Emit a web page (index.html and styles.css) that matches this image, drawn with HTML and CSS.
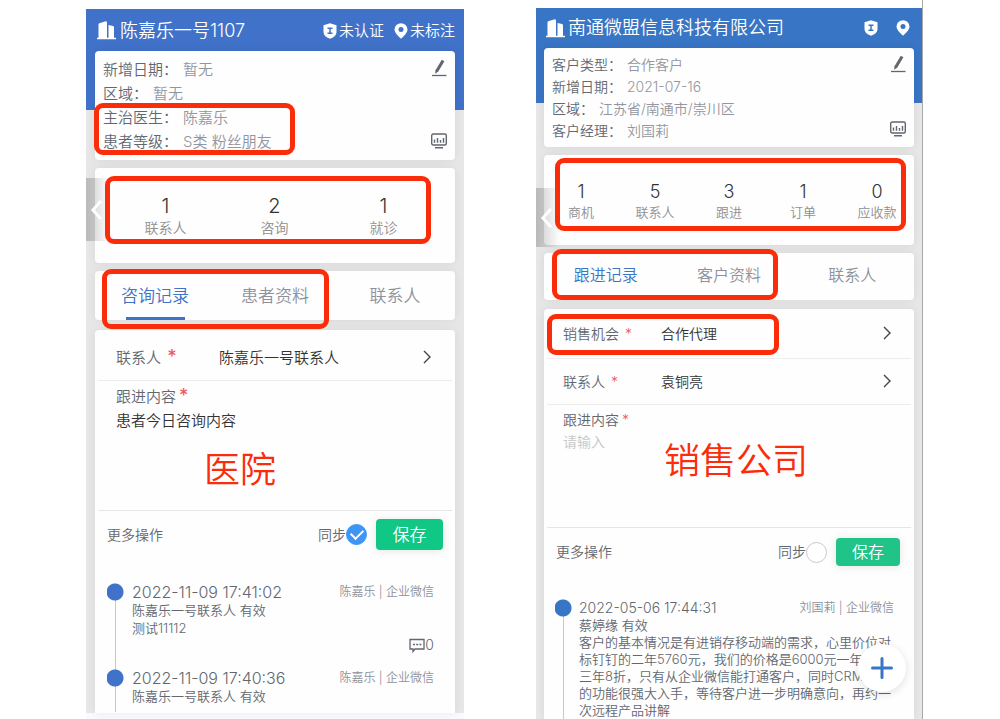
FILE: index.html
```
<!DOCTYPE html>
<html lang="zh-CN">
<head>
<meta charset="utf-8">
<title>客户跟进</title>
<link rel="stylesheet" href="styles.css">
</head>
<body>
<svg class="defs" aria-hidden="true">
  <symbol id="building" viewBox="0 0 19 19"><path d="M1.500 3.200 Q1.500 2.500 2.200 2.200 L8 .4 Q10 0 10 1.800 V18 H1.500Z M11.500 4 L16 5 Q17 5.300 17 6.200 V18 H11.500Z M0 16.800 H19 V18.300 H0Z" fill="currentColor"/></symbol>
  <symbol id="shield" viewBox="0 0 14 16"><path d="M7 .2 L13.500 2.300 V9 Q13.500 13.500 7 15.800 Q.5 13.500 .5 9 V2.300Z" fill="currentColor"/><path d="M4.500 5.200H9.500M4.500 10.300H9.500M7 5V10.500" fill="none" stroke="var(--brand)" stroke-width="1.500"/></symbol>
  <symbol id="pin" viewBox="0 0 14 16"><path d="M7 .2 A6.500 6.500 0 0 1 13.500 6.700 Q13.500 9.800 7 15.800 Q.5 9.800 .5 6.700 A6.500 6.500 0 0 1 7 .2Z" fill="currentColor"/><circle cx="7" cy="6.500" r="2.500" fill="var(--brand)"/></symbol>
  <symbol id="pen" viewBox="0 0 16 18"><path d="M1 16.500H15.500" stroke="currentColor" stroke-width="1.300"/><path d="M10.800 .8 L13.400 2.300 L7.300 12.600 L4.200 14.700 L4.500 11.200Z" fill="currentColor"/></symbol>
  <symbol id="chart" viewBox="0 0 16 16"><rect x=".7" y="1" width="14.600" height="11" rx="1.500" fill="none" stroke="currentColor" stroke-width="1.400"/><path d="M3.500 6.500V9.700M6.500 5V9.700M9.500 7V9.700M12.500 5V9.700M4 14.700H12" stroke="currentColor" stroke-width="1.400"/></symbol>
  <symbol id="right" viewBox="0 0 10 14"><path d="M2 1 L8 7 L2 13" fill="none" stroke="currentColor" stroke-width="1.400"/></symbol>
  <symbol id="left" viewBox="0 0 14 22"><path d="M12 2 L4 11 L12 20" fill="none" stroke="currentColor" stroke-width="3"/></symbol>
  <symbol id="comment" viewBox="0 0 16 15"><path d="M1 1.500H15V11H6L4 13.500V11H1Z" fill="none" stroke="currentColor" stroke-width="1.300"/><path d="M4 6.500H6M7.200 6.500H9.200M10.400 6.500H12.400" stroke="currentColor" stroke-width="1.500"/></symbol>
  <symbol id="plus" viewBox="0 0 22 22"><path d="M11 1.500V20.500M1.500 11H20.500" stroke="currentColor" stroke-width="3" stroke-linecap="round"/></symbol>
</svg>
<main class="compare">
  <section class="screen hospital">
    <div class="phone">
      <header class="top">
        <svg class="i-building"><use href="#building"/></svg>
        <h1>陈嘉乐一号1107</h1>
        <button class="status"><svg class="i-badge"><use href="#shield"/></svg>未认证</button>
        <button class="status"><svg class="i-badge"><use href="#pin"/></svg>未标注</button>
      </header>
      <section class="card info">
        <dl>
          <div><dt>新增日期：</dt><dd>暂无</dd></div>
          <div><dt>区域：</dt><dd>暂无</dd></div>
          <div><dt>主治医生：</dt><dd>陈嘉乐</dd></div>
          <div><dt>患者等级：</dt><dd>S类 粉丝朋友</dd></div>
        </dl>
        <div class="tools">
          <button aria-label="编辑"><svg class="i-pen"><use href="#pen"/></svg></button>
          <button aria-label="统计"><svg class="i-chart"><use href="#chart"/></svg></button>
        </div>
      </section>
      <section class="card stats">
        <div><b>1</b><span>联系人</span></div>
        <div><b>2</b><span>咨询</span></div>
        <div><b>1</b><span>就诊</span></div>
      </section>
      <nav class="card tabs">
        <button class="active">咨询记录</button>
        <button>患者资料</button>
        <button>联系人</button>
      </nav>
      <section class="card record">
        <button class="pick"><span class="name">联系人 <i>*</i></span><span class="value">陈嘉乐一号联系人</span><svg class="i-right"><use href="#right"/></svg></button>
        <div class="content">
          <label for="note-a">跟进内容<i>*</i></label>
          <textarea id="note-a">患者今日咨询内容</textarea>
        </div>
        <div class="actions">
          <span class="more">更多操作</span>
          <label for="sync-a">同步</label><input type="checkbox" id="sync-a" checked>
          <button class="save">保存</button>
        </div>
        <ol class="timeline">
          <li>
            <div class="when"><time>2022-11-09 17:41:02</time><span>陈嘉乐 | 企业微信</span></div>
            <p>陈嘉乐一号联系人 有效</p>
            <p>测试11112</p>
            <button class="reply"><svg class="i-comment"><use href="#comment"/></svg>0</button>
          </li>
          <li>
            <div class="when"><time>2022-11-09 17:40:36</time><span>陈嘉乐 | 企业微信</span></div>
            <p>陈嘉乐一号联系人 有效</p>
          </li>
        </ol>
      </section>
      <button class="drawer" aria-label="展开"><svg class="i-left"><use href="#left"/></svg></button>
      <div class="mark mark-info"></div>
      <div class="mark mark-stats"></div>
      <div class="mark mark-tabs"></div>
      <strong class="caption">医院</strong>
    </div>
  </section>

  <section class="screen sales">
    <div class="phone">
      <header class="top">
        <svg class="i-building"><use href="#building"/></svg>
        <h1>南通微盟信息科技有限公司</h1>
        <button class="status" aria-label="认证"><svg class="i-badge"><use href="#shield"/></svg></button>
        <button class="status" aria-label="位置"><svg class="i-badge"><use href="#pin"/></svg></button>
      </header>
      <section class="card info">
        <dl>
          <div><dt>客户类型：</dt><dd>合作客户</dd></div>
          <div><dt>新增日期：</dt><dd>2021-07-16</dd></div>
          <div><dt>区域：</dt><dd>江苏省/南通市/崇川区</dd></div>
          <div><dt>客户经理：</dt><dd>刘国莉</dd></div>
        </dl>
        <div class="tools">
          <button aria-label="编辑"><svg class="i-pen"><use href="#pen"/></svg></button>
          <button aria-label="统计"><svg class="i-chart"><use href="#chart"/></svg></button>
        </div>
      </section>
      <section class="card stats">
        <div><b>1</b><span>商机</span></div>
        <div><b>5</b><span>联系人</span></div>
        <div><b>3</b><span>跟进</span></div>
        <div><b>1</b><span>订单</span></div>
        <div><b>0</b><span>应收款</span></div>
      </section>
      <nav class="card tabs">
        <button class="active">跟进记录</button>
        <button>客户资料</button>
        <button>联系人</button>
      </nav>
      <section class="card record">
        <button class="pick"><span class="name">销售机会 <i>*</i></span><span class="value">合作代理</span><svg class="i-right"><use href="#right"/></svg></button>
        <button class="pick"><span class="name">联系人 <i>*</i></span><span class="value">袁铜亮</span><svg class="i-right"><use href="#right"/></svg></button>
        <div class="content">
          <label for="note-b">跟进内容<i>*</i></label>
          <textarea id="note-b" placeholder="请输入"></textarea>
        </div>
        <div class="actions">
          <span class="more">更多操作</span>
          <label for="sync-b">同步</label><input type="checkbox" id="sync-b">
          <button class="save">保存</button>
        </div>
        <ol class="timeline">
          <li>
            <div class="when"><time>2022-05-06 17:44:31</time><span>刘国莉 | 企业微信</span></div>
            <p>蔡婷缘 有效</p>
            <p>客户的基本情况是有进销存移动端的需求，心里价位对<br>标钉钉的二年5760元，我们的价格是6000元一年<br>三年8折，只有从企业微信能打通客户，同时CRM<br>的功能很强大入手，等待客户进一步明确意向，再约一<br>次远程产品讲解</p>
          </li>
        </ol>
      </section>
      <button class="drawer" aria-label="展开"><svg class="i-left"><use href="#left"/></svg></button>
      <button class="add" aria-label="新增"><svg class="i-plus"><use href="#plus"/></svg></button>
      <div class="mark mark-stats"></div>
      <div class="mark mark-tabs"></div>
      <div class="mark mark-pick"></div>
      <strong class="caption">销售公司</strong>
    </div>
  </section>
</main>
</body>
</html>
```
FILE: styles.css
```
* { box-sizing: border-box; }

body {
  margin: 0;
  background: #fff;
  color: #62676f;
  font-family: Inter, "Noto Sans CJK SC", sans-serif;
  font-weight: 350;
}

button {
  border: 0;
  padding: 0;
  background: none;
  color: inherit;
  font: inherit;
  cursor: pointer;
}

svg { display: block; flex: none; }
i { font-style: normal; color: #f25a5a; }
.defs { position: absolute; width: 0; height: 0; }
.i-building { width: 19px; height: 19px; }
.i-badge { width: 14px; height: 16px; }
.i-pen { width: 16px; height: 18px; }
.i-chart { width: 16px; height: 16px; }
.i-right { width: 10px; height: 14px; }
.i-left { width: 14px; height: 22px; }
.i-comment { width: 16px; height: 15px; }
.i-plus { width: 22px; height: 22px; }

.compare {
  display: grid;
  grid-template-columns: 378fr 387fr;
  column-gap: 72px;
  min-height: 100vh;
  padding: 0 77px 0 86px;
}

.screen { display: flex; flex-direction: column; }

.hospital {
  --brand: #4172c9;
  --pad: 9px;
  --text: 15px;
  --row: 24px;
  padding-top: 9px;
  border-bottom: 6px solid #f8fafd;
}

.sales {
  --brand: #3875c5;
  --pad: 8px;
  --text: 14px;
  --row: 22px;
  padding-top: 8px;
  border-right: 1px solid #a9a9a9;
}

.phone {
  position: relative;
  flex: 1;
  display: flex;
  flex-direction: column;
  gap: 8px;
  padding: 0 var(--pad);
  background: linear-gradient(var(--brand) 101px, #e7e7e7 101px);
}
.sales .phone { background: linear-gradient(var(--brand) 95px, #e7e7e7 95px); }

.card {
  border-radius: 4px;
  background: #fefefe;
  box-shadow: 0 0 10px rgba(0, 0, 0, .07);
}

/* title bar */
.top {
  display: flex;
  align-items: center;
  height: 34px;
  padding-top: 9px;
  padding-left: 2px;
  color: #fff;
}
.top h1 {
  flex: 1;
  margin: 0 0 0 4px;
  font-size: 18px;
  line-height: 26px;
  font-weight: 350;
  white-space: nowrap;
}
.status {
  display: flex;
  align-items: center;
  gap: 2px;
  margin-left: 10px;
  font-size: 15px;
  line-height: 22px;
}
.sales .top { height: 32px; padding-top: 8px; padding-right: 4px; }
.sales .top h1 { margin-left: 3px; }
.sales .status { margin-left: 18px; }

/* customer details */
.info {
  display: flex;
  justify-content: space-between;
  padding: 7px 8px 6px;
}
.info dl { margin: 0; font-size: var(--text); line-height: var(--row); }
.info dl div { display: flex; gap: 5px; }
.info dd { margin: 0; color: #92969f; }
.tools {
  display: flex;
  flex-direction: column;
  justify-content: space-between;
  padding: 1px 0 5px;
}
.sales .info { padding: 6px 8px 5px; }

/* counters */
.stats {
  display: grid;
  grid-template-columns: repeat(3, 1fr);
  padding: 26px 17px 26px 16px;
  text-align: center;
}
.stats b {
  display: block;
  color: #333;
  font-size: 20px;
  font-weight: 350;
  line-height: 24px;
}
.stats span {
  display: block;
  color: #8f8f8f;
  font-size: 14px;
  line-height: 19px;
}
.sales .stats { grid-template-columns: repeat(5, 1fr); padding: 26px 0 24px; }
.sales .stats b { font-size: 18px; line-height: 22px; }
.sales .stats span { font-size: 13px; line-height: 18px; }

/* tabs */
.tabs { display: grid; grid-template-columns: repeat(3, 1fr); }
.tabs button {
  height: 49px;
  color: #8c919d;
  font-size: 17px;
  line-height: 24px;
}
.tabs .active { color: var(--brand); }
.hospital .tabs .active {
  background: linear-gradient(var(--brand), var(--brand)) center bottom / 59px 3px no-repeat;
}
.sales .tabs button { height: 47px; padding-bottom: 3px; font-size: 16px; }

/* follow-up form */
.record {
  flex: 1;
  margin-top: 2px;
  padding: 0 3px;
  border-radius: 4px 4px 0 0;
  font-size: var(--text);
}
.pick {
  display: flex;
  align-items: center;
  width: 100%;
  height: 51px;
  padding: 3px 20px 0 18px;
  border-bottom: 1px solid #ececec;
  text-align: left;
}
.pick .name { width: 103px; }
.pick .value { flex: 1; color: #333; }
.pick .i-right { color: #444; }
.pick i { margin-left: 2px; }
.hospital i { font-size: 18px; line-height: 18px; font-weight: 500; }
.content {
  height: 130px;
  padding: 4px 18px 0;
  border-bottom: 1px solid #e6e6e6;
}
.content label { display: block; height: var(--row); line-height: var(--row); }
.content i { margin-left: 3px; }
.content textarea {
  display: block;
  width: 100%;
  height: 80px;
  padding: 0;
  border: 0;
  outline: 0;
  resize: none;
  background: none;
  color: #333;
  font: inherit;
  line-height: var(--row);
}
.content textarea::placeholder { color: #c6c6c6; opacity: 1; }
.sales .record { margin-top: 1px; }
.sales .pick { height: 46px; padding: 0 19px 2px 16px; }
.sales .pick:first-child { height: 50px; }
.sales .pick .name { width: 98px; }
.sales .content { height: 123px; padding: 4px 16px 0; }

.actions {
  display: flex;
  align-items: center;
  padding: 8px 9px 0;
  font-size: 14px;
  line-height: 20px;
}
.more { flex: 1; }
.actions input {
  appearance: none;
  width: 21px;
  height: 21px;
  margin: 0 9px 0 0;
  border: 1px solid #c9c9c9;
  border-radius: 50%;
  background: #fff;
}
.actions input:checked {
  display: grid;
  place-items: center;
  border-color: #3d95f5;
  background: #3d95f5;
}
.actions input:checked::before {
  content: "";
  width: 10px;
  height: 6px;
  margin-bottom: 3px;
  border: solid #fff;
  border-width: 0 0 2px 2px;
  rotate: -45deg;
}
.save {
  width: 67px;
  height: 31px;
  border-radius: 4px;
  background: #10c785;
  color: #fff;
  font-size: 17px;
  line-height: 24px;
  box-shadow: 0 1px 10px rgba(0, 0, 0, .1);
}
.sales .actions { padding: 10px 11px 0 9px; }
.sales .save { width: 64px; height: 28px; font-size: 16px; background: #20c388; }

/* history */
.timeline {
  margin: 33px 0 0;
  padding: 0 18px 0 9px;
  list-style: none;
}
.timeline li {
  padding: 0 0 16px 25px;
  background:
    radial-gradient(circle at 8px 9px, var(--brand) 8px, transparent 9px),
    linear-gradient(#c4c8d0, #c4c8d0) 8px 0 / 1px 100% no-repeat;
}
.timeline li:last-child { padding-bottom: 7px; }
.timeline li:first-child {
  background:
    radial-gradient(circle at 8px 9px, var(--brand) 8px, transparent 9px),
    linear-gradient(#c4c8d0, #c4c8d0) 8px 9px / 1px 100% no-repeat;
}
.when { display: flex; justify-content: space-between; align-items: center; }
.when time { font-size: 16px; line-height: 18px; white-space: nowrap; }
.when span { color: #8c919d; font-size: 12px; line-height: 18px; white-space: nowrap; }
.timeline p {
  margin: 0;
  font-size: 13px;
  line-height: 18px;
  white-space: nowrap;
}
.reply {
  display: flex;
  align-items: center;
  margin-left: auto;
  font-size: 14px;
  line-height: 16px;
}
.sales .timeline { margin-top: 33px; padding: 0 17px 0 8px; }
.sales .timeline li { padding-left: 24px; padding-bottom: 0; }
.sales .when time { font-size: 14px; line-height: 18px; }
.sales .timeline p { line-height: 17px; }

/* floating controls */
.drawer {
  position: absolute;
  left: 0;
  top: 169px;
  display: grid;
  place-items: center start;
  width: 24px;
  height: 63px;
  padding-left: 3px;
  background: linear-gradient(90deg, rgba(0, 0, 0, .2), rgba(0, 0, 0, 0));
  color: #fff;
}
.sales .drawer { top: 180px; height: 59px; }
.add {
  position: absolute;
  right: 16px;
  top: 636px;
  display: grid;
  place-items: center;
  width: 48px;
  height: 48px;
  border-radius: 50%;
  background: #fff;
  color: var(--brand);
  box-shadow: 0 2px 8px rgba(0, 0, 0, .12);
}

/* annotations */
.mark {
  position: absolute;
  border: 5px solid #fa2c0a;
  border-radius: 9px;
  pointer-events: none;
}
.caption {
  position: absolute;
  color: #fa2c0a;
  font-size: 36px;
  line-height: 48px;
  font-weight: 350;
}
.hospital .mark-info { left: 8px; top: 94px; width: 201px; height: 52px; }
.hospital .mark-stats { left: 19px; top: 167px; width: 326px; height: 68px; }
.hospital .mark-tabs { left: 16px; top: 260px; width: 227px; height: 60px; }
.hospital .caption { left: 118px; top: 437px; }
.sales .mark-stats { left: 19px; top: 150px; width: 351px; height: 73px; }
.sales .mark-tabs { left: 16px; top: 241px; width: 226px; height: 51px; }
.sales .mark-pick { left: 11px; top: 306px; width: 232px; height: 41px; }
.sales .caption { left: 128px; top: 429px; }
```
